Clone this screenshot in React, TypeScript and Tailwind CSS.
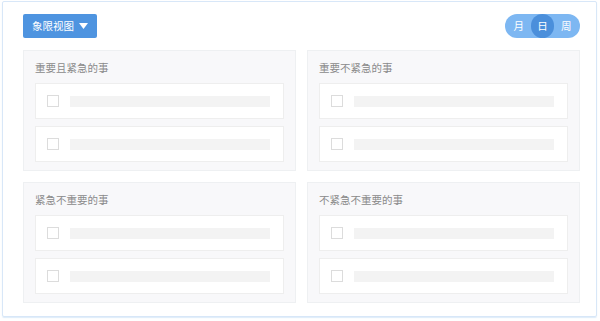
import React from "react";

const QUADRANTS = ["重要且紧急的事", "重要不紧急的事", "紧急不重要的事", "不紧急不重要的事"];

function TaskRow() {
  return (
    <div className="flex h-[36px] items-center gap-[11px] border border-[#eeeeee] bg-white pl-[11px]">
      <span className="h-[12px] w-[12px] shrink-0 border border-[#dcdcdc] bg-white" />
      <span className="h-[11px] w-[200px] bg-[#f3f3f3]" />
    </div>
  );
}

function Quadrant({ title }: { title: string }) {
  return (
    <div className="flex h-[121px] flex-col border border-[#eef0f2] bg-[#f8f8fa] px-[11px] pt-[10px]">
      <div className="text-[10.5px] leading-[14px] text-[#8a8a8a]">{title}</div>
      <div className="mt-[8px] flex flex-col gap-[7px]">
        <TaskRow />
        <TaskRow />
      </div>
    </div>
  );
}

export default function App() {
  return (
    <div
      className="h-[321px] w-[600px] bg-white pl-[2px] pt-[1px]"
      style={{ fontFamily: '"Noto Sans CJK SC", "Noto Sans", sans-serif' }}
    >
      <div className="h-[316px] w-[595px] rounded-[2px] border border-[#d8e7f8] pl-[20px] pr-[16px] pt-[12px] shadow-[0_1px_1px_rgba(160,200,240,0.35)]">
        {/* Header */}
        <div className="flex h-[24px] items-center justify-between">
          <button className="flex h-[24px] w-[74px] items-center justify-center gap-[5px] rounded-[2px] bg-[#4e94e0] text-[10.5px] text-white">
            <span>象限视图</span>
            <svg width="9" height="6" viewBox="0 0 9 6">
              <path d="M0 0 H9 L4.5 6 Z" fill="#ffffff" />
            </svg>
          </button>
          <div className="flex h-[24px] w-[75px] items-center justify-between rounded-full bg-[#7db7f2] px-[2px] text-[10.5px] text-white">
            <span className="flex h-[24px] w-[24px] items-center justify-center">月</span>
            <span className="flex h-[24px] w-[24px] items-center justify-center rounded-full bg-[#4b8fdb]">日</span>
            <span className="flex h-[24px] w-[24px] items-center justify-center">周</span>
          </div>
        </div>

        {/* Quadrants */}
        <div className="mt-[12px] grid grid-cols-2 gap-[11px]">
          {QUADRANTS.map((q) => (
            <Quadrant key={q} title={q} />
          ))}
        </div>
      </div>
    </div>
  );
}
